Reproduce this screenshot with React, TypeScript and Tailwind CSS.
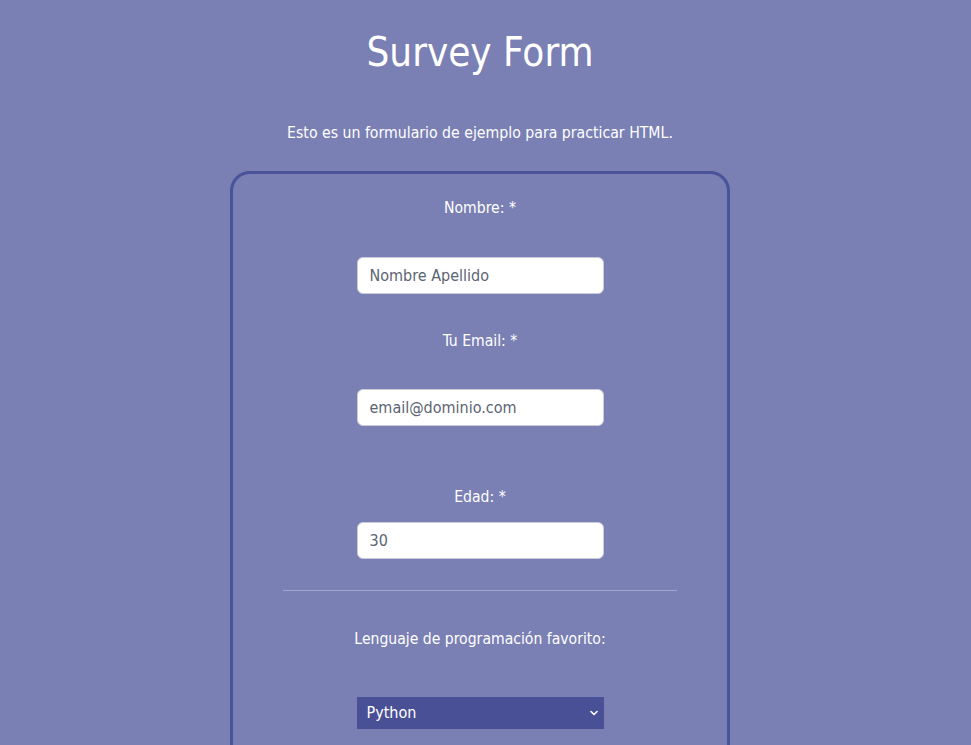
import React from "react";

export default function App() {
  const font = { fontFamily: '"DejaVu Sans Condensed", "DejaVu Sans", Verdana, sans-serif' };
  return (
    <div className="min-h-[745px] w-full bg-[#7a7fb4] text-white" style={font}>
      <div className="flex w-[960px] flex-col items-center">
        <h1 className="mt-[27px] text-[40px] leading-[50px] font-normal">Survey Form</h1>
        <p className="mt-[47px] text-[15.7px] leading-[18px]">Esto es un formulario de ejemplo para practicar HTML.</p>
        <form className="mt-[29px] flex w-[500px] flex-col items-center rounded-[20px] border-[3px] border-[#4a5299] pb-10">
          <label className="mt-[25px] text-[15.6px] leading-[19px]">Nombre: *</label>
          <input
            className="mt-[39px] h-[37px] w-[247px] rounded-[6px] border border-[#c9cbd6] bg-white px-3 text-[16px] text-[#333] placeholder:text-[#5b6472] outline-none"
            placeholder="Nombre Apellido"
          />
          <label className="mt-[38px] text-[15.6px] leading-[19px]">Tu Email: *</label>
          <input
            className="mt-[38px] h-[37px] w-[247px] rounded-[6px] border border-[#c9cbd6] bg-white px-3 text-[16px] text-[#333] placeholder:text-[#5b6472] outline-none"
            placeholder="email@dominio.com"
          />
          <label className="mt-[62px] text-[15.6px] leading-[19px]">Edad: *</label>
          <input
            className="mt-[15px] h-[37px] w-[247px] rounded-[6px] border border-[#c9cbd6] bg-white px-3 text-[16px] text-[#333] placeholder:text-[#5b6472] outline-none"
            placeholder="30"
          />
          <div className="mt-[31px] h-px w-[394px] bg-[#a3a7cc]" />
          <label className="mt-[39px] text-[15.6px] leading-[19px]">Lenguaje de programación favorito:</label>
          <div className="mt-[48px] flex h-[32px] w-[247px] items-center justify-between bg-[#4a5096] pl-[10px] pr-[5px] text-[16px]">
            <span>Python</span>
            <svg width="10" height="10" viewBox="0 0 10 10" fill="none">
              <path d="M2 3.5 L5 6.5 L8 3.5" stroke="white" strokeWidth="1.6" strokeLinecap="round" strokeLinejoin="round" />
            </svg>
          </div>
        </form>
      </div>
    </div>
  );
}
